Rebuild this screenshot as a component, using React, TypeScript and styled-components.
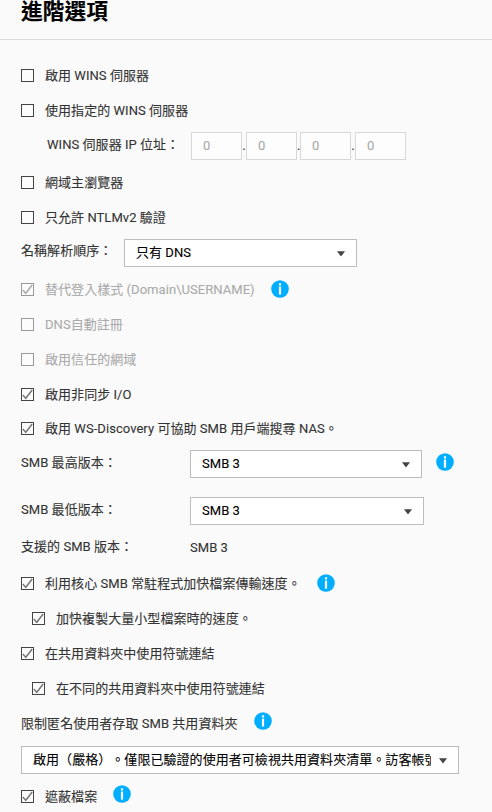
import React from "react";
import styled, { createGlobalStyle } from "styled-components";

const GlobalStyle = createGlobalStyle`
  * { box-sizing: border-box; }
  html, body { margin: 0; background: #fafafa; }
  body {
    font-family: Roboto, "Noto Sans CJK TC", sans-serif;
    font-size: 13px;
    line-height: 20px;
    letter-spacing: 0.05px;
    text-spacing-trim: space-all;
    -webkit-text-stroke: 0.1px currentColor;
    color: #333;
    overflow: hidden;
  }
`;

const Page = styled.main`
  width: 492px;
  height: 812px;
  overflow: hidden;
  background: #fafafa;
`;

const Header = styled.header`
  height: 40px;
  padding-left: 21px;
  border-bottom: 1px solid #dcdcdc;
  margin-bottom: 18px;
`;

const Title = styled.h1`
  margin: 0;
  font-size: 21.7px;
  line-height: 24px;
  font-weight: 700;
  color: #000;
`;

const Form = styled.form`
  display: flex;
  flex-direction: column;
  padding-left: 21px;
`;

const Row = styled.div<{ $h?: number; $indent?: number }>`
  display: flex;
  align-items: center;
  height: ${(p) => p.$h ?? 35}px;
  padding-left: ${(p) => p.$indent ?? 0}px;
  white-space: nowrap;
`;

const Box = styled.span<{ $disabled?: boolean }>`
  flex: none;
  display: block;
  width: 13px;
  height: 13px;
  margin-right: 11px;
  border: 1px solid ${(p) => (p.$disabled ? "#999" : "#444")};
  background: #fcfcfc;

  svg { display: block; }
`;

const Text = styled.span<{ $disabled?: boolean; $up?: number; $w?: number }>`
  flex: none;
  width: ${(p) => (p.$w ? `${p.$w}px` : "auto")};
  padding-bottom: ${(p) => (p.$up ?? 0) * 2}px;
  color: ${(p) => (p.$disabled ? "#aaa" : "#333")};
`;

const InfoIcon = styled.svg<{ $left: number; $up?: number }>`
  flex: none;
  display: block;
  width: 18px;
  height: 18px;
  margin-left: ${(p) => p.$left}px;
  margin-bottom: ${(p) => (p.$up ?? 0) * 2}px;
`;

const Octet = styled.span`
  width: 51px;
  height: 28px;
  padding-left: 11px;
  border: 1px solid #d8d8d8;
  background: #fdfdfd;
  line-height: 26px;
  color: #aaa;
`;

const Dot = styled.span<{ $w: number }>`
  width: ${(p) => p.$w}px;
  text-align: center;
`;

const Select = styled.div<{ $w: number }>`
  flex: none;
  display: flex;
  align-items: center;
  justify-content: space-between;
  width: ${(p) => p.$w}px;
  height: 28px;
  padding: 0 11px;
  border: 1px solid #bdbdbd;
  background: #fff;
  color: #000;

  svg { flex: none; display: block; margin: 1px 0 0 8px; }
`;

const Value = styled.span`
  flex: 1;
  min-width: 0;
  overflow: hidden;
`;

function Check({ checked, disabled }: { checked?: boolean; disabled?: boolean }) {
  return (
    <Box $disabled={disabled}>
      {checked && (
        <svg width="11" height="11" viewBox="0 0 11 11">
          <path d="M0.8 6 L3.8 9.3 L10.2 1" fill="none" stroke={disabled ? "#aaa" : "#777"} strokeWidth="1.5" />
        </svg>
      )}
    </Box>
  );
}

function Info({ left, up }: { left: number; up?: number }) {
  return (
    <InfoIcon $left={left} $up={up} viewBox="0 0 18 18">
      <circle cx="9" cy="9" r="8.8" fill="#00aeff" />
      <rect x="7.9" y="3.3" width="2.2" height="2.2" fill="#fff" />
      <rect x="7.9" y="6.6" width="2.2" height="8" fill="#fff" />
    </InfoIcon>
  );
}

function Dropdown({ width, children }: { width: number; children: React.ReactNode }) {
  return (
    <Select $w={width}>
      <Value>{children}</Value>
      <svg width="8" height="6" viewBox="0 0 8 6">
        <path d="M0 0.3 H8 L4 5.6 Z" fill="#444" />
      </svg>
    </Select>
  );
}

interface OptionProps {
  label: string;
  checked?: boolean;
  disabled?: boolean;
  indent?: number;
  height?: number;
  info?: number;
  infoUp?: number;
}

function Option({ label, checked, disabled, indent, height, info, infoUp }: OptionProps) {
  return (
    <Row $h={height} $indent={indent}>
      <Check checked={checked} disabled={disabled} />
      <Text $disabled={disabled}>{label}</Text>
      {info !== undefined && <Info left={info} up={infoUp} />}
    </Row>
  );
}

export default function App() {
  return (
    <Page>
      <GlobalStyle />
      <Header>
        <Title>進階選項</Title>
      </Header>
      <Form>
        <Option label="啟用 WINS 伺服器" />
        <Option label="使用指定的 WINS 伺服器" />
        <Row $h={36} $indent={26}>
          <Text $w={144} $up={1}>WINS 伺服器 IP 位址：</Text>
          <Octet>0</Octet>
          <Dot $w={4}>.</Dot>
          <Octet>0</Octet>
          <Dot $w={3}>.</Dot>
          <Octet>0</Octet>
          <Dot $w={4}>.</Dot>
          <Octet>0</Octet>
        </Row>
        <Option label="網域主瀏覽器" height={37} />
        <Option label="只允許 NTLMv2 驗證" height={33} />
        <Row $h={38}>
          <Text $w={103} $up={2}>名稱解析順序：</Text>
          <Dropdown width={233}>只有 DNS</Dropdown>
        </Row>
        <Option label="替代登入樣式 (Domain\USERNAME)" checked disabled info={16} infoUp={0.5} />
        <Option label="DNS自動註冊" disabled />
        <Option label="啟用信任的網域" disabled />
        <Option label="啟用非同步 I/O" checked />
        <Option label="啟用 WS-Discovery 可協助 SMB 用戶端搜尋 NAS。" checked height={33} />
        <Row $h={38}>
          <Text $w={169} $up={1}>SMB 最高版本：</Text>
          <Dropdown width={232}>SMB 3</Dropdown>
          <Info left={14} up={2} />
        </Row>
        <Row $h={56}>
          <Text $w={169} $up={1}>SMB 最低版本：</Text>
          <Dropdown width={234}>SMB 3</Dropdown>
        </Row>
        <Row $h={27}>
          <Text $w={169} $up={6}>支援的 SMB 版本：</Text>
          <Text $up={5}>SMB 3</Text>
        </Row>
        <Option label="利用核心 SMB 常駐程式加快檔案傳輸速度。" checked info={16} infoUp={0.5} />
        <Option label="加快複製大量小型檔案時的速度。" checked indent={11} />
        <Option label="在共用資料夾中使用符號連結" checked />
        <Option label="在不同的共用資料夾中使用符號連結" checked indent={11} />
        <Row>
          <Text>限制匿名使用者存取 SMB 共用資料夾</Text>
          <Info left={16} up={2.5} />
        </Row>
        <Row $h={38}>
          <Dropdown width={438}>啟用（嚴格）。僅限已驗證的使用者可檢視共用資料夾清單。訪客帳號</Dropdown>
        </Row>
        <Option label="遮蔽檔案" checked info={16} infoUp={2.5} />
      </Form>
    </Page>
  );
}
